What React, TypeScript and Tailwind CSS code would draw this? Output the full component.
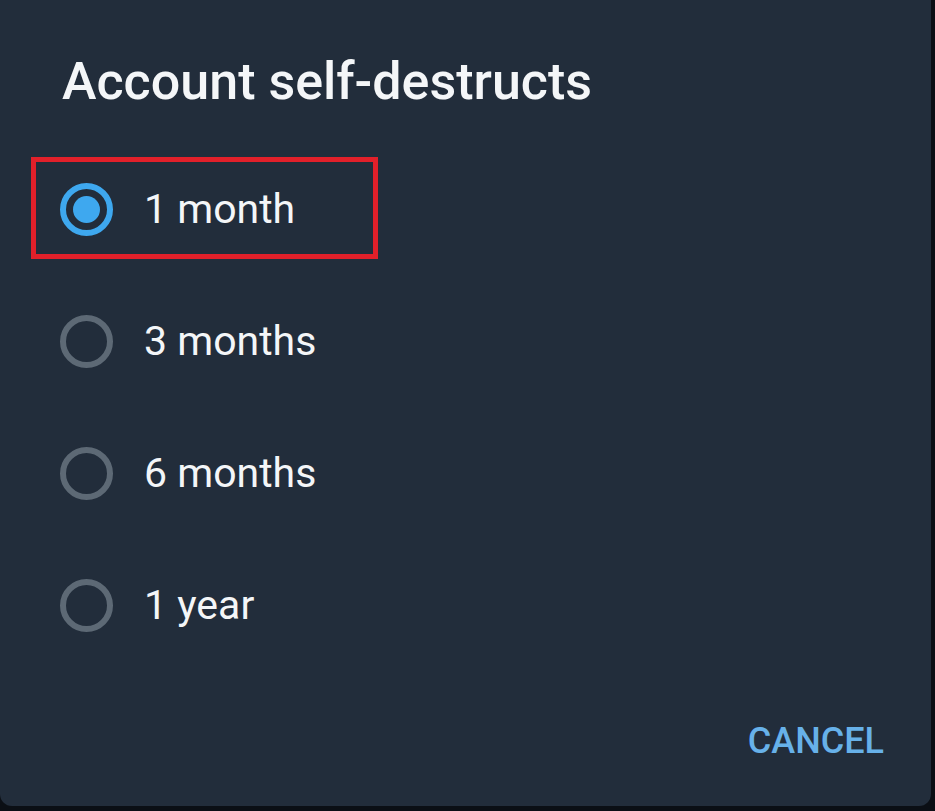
import { useState } from "react";

const options = ["1 month", "3 months", "6 months", "1 year"];

function Radio({ checked }: { checked: boolean }) {
  return (
    <span
      className={`flex h-[53px] w-[53px] shrink-0 items-center justify-center rounded-full border-[6px] ${
        checked ? "border-[#3ea8ef]" : "border-[#5d6975]"
      }`}
    >
      {checked ? <span className="h-[27px] w-[27px] rounded-full bg-[#3ea8ef]" /> : null}
    </span>
  );
}

export default function App() {
  const [selected, setSelected] = useState("1 month");

  return (
    <div className="h-[811px] w-[935px] bg-[#0b0f15] font-['Roboto',sans-serif]">
      <div className="relative flex h-[806px] w-[931px] flex-col rounded-b-[12px] bg-[#222d3b]">
        <h2 className="pl-[62px] pt-[52px] text-[52px] font-medium leading-[60px] text-[#f4f6f8]">
          Account self-destructs
        </h2>
        <div className="mt-[31px] flex flex-col">
          {options.map((option) => (
            <button
              key={option}
              type="button"
              className="flex h-[132px] items-center gap-[31px] pl-[60px] text-left"
              onClick={() => setSelected(option)}
            >
              <Radio checked={selected === option} />
              <span className="text-[41px] leading-[132px] text-[#f4f6f8]">{option}</span>
            </button>
          ))}
        </div>
        <div className="mt-[50px] flex justify-end pr-[47px]">
          <button type="button" className="text-[36px] font-medium leading-[40px] text-[#67b1e9]">
            CANCEL
          </button>
        </div>
        {/* highlight box */}
        <div className="pointer-events-none absolute left-[31px] top-[157px] h-[102px] w-[347px] border-[5px] border-[#e2202a]" />
      </div>
    </div>
  );
}
